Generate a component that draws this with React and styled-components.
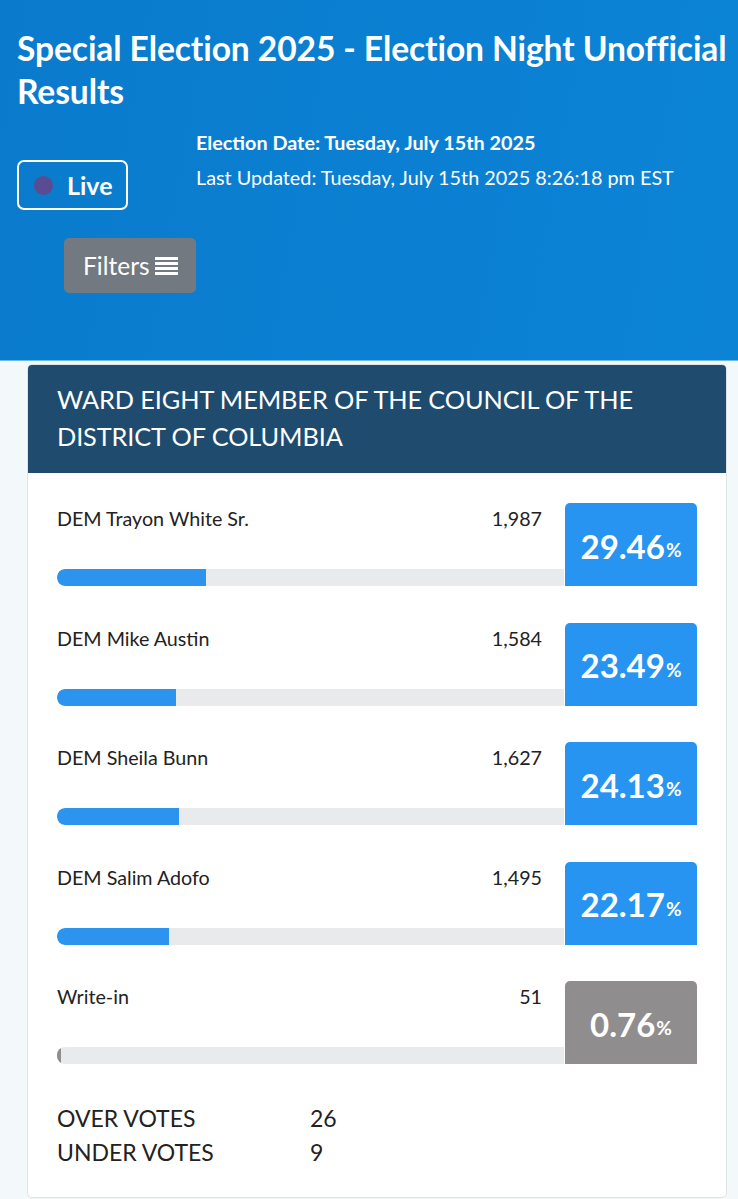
import styled, { createGlobalStyle } from "styled-components";

const GlobalStyle = createGlobalStyle`
  html, body {
    margin: 0;
    padding: 0;
    background: #f3f8fa;
    font-family: Lato, "Open Sans", sans-serif;
  }
`;

const Banner = styled.header`
  background: linear-gradient(100deg, #0a7bcc 0%, #0b80d2 60%, #0c84d6 100%);
  color: #fff;
  height: 361px;
  padding: 27px 0 0 17px;
  box-sizing: border-box;
  border-bottom: 1px solid #6fb8ea;
`;

const Title = styled.h1`
  margin: 0;
  font-size: 33.6px;
  font-weight: 700;
  line-height: 43px;
  letter-spacing: -0.1px;
`;

const InfoRow = styled.div`
  display: flex;
  margin-top: 12px;
`;

const LeftCol = styled.div`
  display: flex;
  flex-direction: column;
  align-items: flex-start;
  padding-top: 35px;
`;

const LiveButton = styled.div`
  display: flex;
  align-items: center;
  gap: 14px;
  width: 111px;
  height: 50px;
  box-sizing: border-box;
  border: 2px solid #fff;
  border-radius: 7px;
  padding-left: 15px;
  font-size: 25px;
  font-weight: 700;
`;

const Dot = styled.span`
  width: 19px;
  height: 19px;
  border-radius: 50%;
  background: #5a4c91;
`;

const FiltersButton = styled.div`
  display: flex;
  align-items: center;
  gap: 5px;
  margin: 28px 0 0 47px;
  width: 132px;
  height: 55px;
  box-sizing: border-box;
  padding-left: 19px;
  background: #737980;
  border-radius: 5px;
  font-size: 24.5px;
`;

const Dates = styled.div`
  font-size: 19.8px;
  line-height: 35px;
`;

const Strong = styled.div`
  font-weight: 700;
`;

const Main = styled.main`
  padding: 3px 11px 3px 27px;
`;

const Card = styled.section`
  background: #fff;
  border: 1px solid #dfe4e7;
  border-radius: 5px;
  overflow: hidden;
`;

const CardHeader = styled.h2`
  margin: 0;
  background: #1e4b6e;
  color: #fff;
  font-size: 25.3px;
  font-weight: 400;
  line-height: 37px;
  padding: 16px 30px 18px 29px;
  text-transform: uppercase;
  letter-spacing: -0.1px;
`;

const CardBody = styled.div`
  padding: 30px 29px 28px 29px;
`;

const Candidate = styled.div`
  display: grid;
  grid-template-columns: 1fr 132px;
  height: 83px;
  margin-bottom: 36.5px;
`;

const Left = styled.div`
  display: flex;
  flex-direction: column;
  justify-content: space-between;
`;

const NameLine = styled.div`
  display: flex;
  justify-content: space-between;
  padding: 4px 23px 0 0;
  font-size: 19.7px;
  color: #222;
`;

const Track = styled.div`
  height: 17px;
  background: #e8eaec;
  border-radius: 8px 0 0 8px;
  overflow: hidden;
  margin-right: 1px;
`;

const Fill = styled.div`
  height: 100%;
  background: ${(p) => (p.$gray ? "#8f8d8d" : "#2c93ee")};
  border-radius: 8px 0 0 8px;
  min-width: 3px;
`;

const PctBox = styled.div`
  background: ${(p) => (p.$gray ? "#8f8d8d" : "#2694f0")};
  border-radius: 5px 5px 0 0;
  color: #fff;
  display: flex;
  align-items: center;
  justify-content: center;
  font-size: 33px;
  font-weight: 700;
  padding-top: 2px;
  box-sizing: border-box;
`;

const PctSign = styled.span`
  font-size: 19px;
  margin-left: 1px;
  padding-top: 8px;
`;

const Totals = styled.div`
  display: grid;
  grid-template-columns: 253px 1fr;
  font-size: 23px;
  line-height: 34px;
  color: #222;
  margin-top: 3px;
`;

const candidates = [
  { name: "DEM Trayon White Sr.", votes: "1,987", pct: 29.46 },
  { name: "DEM Mike Austin", votes: "1,584", pct: 23.49 },
  { name: "DEM Sheila Bunn", votes: "1,627", pct: 24.13 },
  { name: "DEM Salim Adofo", votes: "1,495", pct: 22.17 },
  { name: "Write-in", votes: "51", pct: 0.76, gray: true },
];

function MenuIcon() {
  return (
    <svg width="23" height="20" viewBox="0 0 23 20">
      <rect x="0" y="1" width="23" height="3" fill="#fff" />
      <rect x="0" y="6" width="23" height="3" fill="#fff" />
      <rect x="0" y="11" width="23" height="3" fill="#fff" />
      <rect x="0" y="16" width="23" height="3" fill="#fff" />
    </svg>
  );
}

export default function App() {
  return (
    <>
      <GlobalStyle />
      <Banner>
        <Title>Special Election 2025 - Election Night Unofficial Results</Title>
        <InfoRow>
          <LeftCol>
            <LiveButton>
              <Dot />
              Live
            </LiveButton>
            <FiltersButton>
              Filters <MenuIcon />
            </FiltersButton>
          </LeftCol>
          <Dates>
            <Strong>Election Date: Tuesday, July 15th 2025</Strong>
            <div>Last Updated: Tuesday, July 15th 2025 8:26:18 pm EST</div>
          </Dates>
        </InfoRow>
      </Banner>
      <Main>
        <Card>
          <CardHeader>
            Ward Eight Member of the Council of the District of Columbia
          </CardHeader>
          <CardBody>
            {candidates.map((c) => (
              <Candidate key={c.name}>
                <Left>
                  <NameLine>
                    <span>{c.name}</span>
                    <span>{c.votes}</span>
                  </NameLine>
                  <Track>
                    <Fill $gray={c.gray} style={{ width: `${c.pct}%` }} />
                  </Track>
                </Left>
                <PctBox $gray={c.gray}>
                  {c.pct.toFixed(2)}
                  <PctSign>%</PctSign>
                </PctBox>
              </Candidate>
            ))}
            <Totals>
              <span>OVER VOTES</span>
              <span>26</span>
              <span>UNDER VOTES</span>
              <span>9</span>
            </Totals>
          </CardBody>
        </Card>
      </Main>
    </>
  );
}
